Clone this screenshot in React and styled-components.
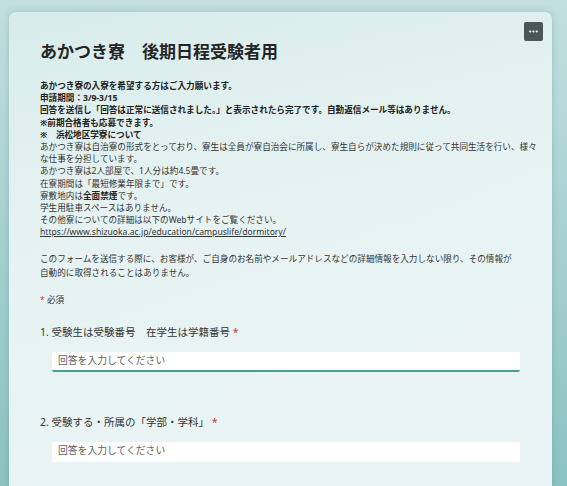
import styled, { createGlobalStyle } from "styled-components";

const GlobalStyle = createGlobalStyle`
  html, body {
    margin: 0;
    padding: 0;
  }
  body {
    background: linear-gradient(180deg, #c3dfdf 0%, #a9d2d2 45%, #8cc2c2 100%);
    font-family: "Noto Sans", "Noto Sans CJK JP", sans-serif;
    overflow: hidden;
  }
`;

export default function App() {
  return (
    <>
      <GlobalStyle />
      <Page>
        <Card>
          <TopBar>
            <MenuButton aria-label="more">
              <svg width="9" height="3" viewBox="0 0 9 3">
                <circle cx="1.2" cy="1.5" r="1.1" fill="#fff" />
                <circle cx="4.5" cy="1.5" r="1.1" fill="#fff" />
                <circle cx="7.8" cy="1.5" r="1.1" fill="#fff" />
              </svg>
            </MenuButton>
          </TopBar>
          <Title>あかつき寮　後期日程受験者用</Title>
          <Description>
            <Line bold>あかつき寮の入寮を希望する方はご入力願います。</Line>
            <Line bold>申請期間：3/9-3/15</Line>
            <Line bold>
              回答を送信し「回答は正常に送信されました。」と表示されたら完了です。自動返信メール等はありません。
            </Line>
            <Line bold>※前期合格者も応募できます。</Line>
            <Line bold>※　浜松地区学寮について</Line>
            <Line>
              あかつき寮は自治寮の形式をとっており、寮生は全員が寮自治会に所属し、寮生自らが決めた規則に従って共同生活を行い、様々な仕事を分担しています。
            </Line>
            <Line>あかつき寮は2人部屋で、1人分は約4.5畳です。</Line>
            <Line>在寮期間は「最短修業年限まで」です。</Line>
            <Line>
              寮敷地内は<strong>全面禁煙</strong>です。
            </Line>
            <Line>学生用駐車スペースはありません。</Line>
            <Line>その他寮についての詳細は以下のWebサイトをご覧ください。</Line>
            <Line>
              <Link href="#">https://www.shizuoka.ac.jp/education/campuslife/dormitory/</Link>
            </Line>
          </Description>
          <Notice>
            このフォームを送信する際に、お客様が、ご自身のお名前やメールアドレスなどの詳細情報を入力しない限り、その情報が自動的に取得されることはありません。
          </Notice>
          <Required>
            <Star>*</Star> 必須
          </Required>
          <Questions>
            <Question>
              <QuestionTitle>
                1. 受験生は受験番号　在学生は学籍番号 <Star>*</Star>
              </QuestionTitle>
              <AnswerInput placeholder="回答を入力してください" active />
            </Question>
            <Question>
              <QuestionTitle>
                2. 受験する・所属の「学部・学科」 <Star>*</Star>
              </QuestionTitle>
              <AnswerInput placeholder="回答を入力してください" />
            </Question>
          </Questions>
        </Card>
      </Page>
    </>
  );
}

const Page = styled.div`
  height: 486px;
  padding: 12px 15px 0 9px;
  box-sizing: border-box;
  display: flex;
`;

const Card = styled.div`
  flex: 1;
  background: linear-gradient(170deg, rgba(220, 238, 238, 0.85) 0%, rgba(236, 245, 245, 0.92) 40%, rgba(240, 247, 247, 0.95) 100%);
  border-radius: 7px 7px 0 0;
  box-shadow: 0 0 6px rgba(60, 110, 110, 0.25);
  padding: 10px 12px 0 31px;
  color: #333333;
`;

const TopBar = styled.div`
  display: flex;
  justify-content: flex-end;
`;

const MenuButton = styled.button`
  width: 19px;
  height: 19px;
  padding: 0;
  border: none;
  border-radius: 2px;
  background-color: #4a5759;
  display: flex;
  align-items: center;
  justify-content: center;
  margin-right: -3px;
`;

const Title = styled.h1`
  margin: 0;
  font-size: 17px;
  line-height: 22px;
  font-weight: 700;
  color: #252525;
`;

const Description = styled.div`
  margin-top: 17px;
  font-size: 8.6px;
  line-height: 12.2px;
`;

const Line = styled.div`
  font-weight: ${(p) => (p.bold ? 700 : 400)};
  color: ${(p) => (p.bold ? "#222222" : "#333333")};
  strong {
    font-weight: 700;
    color: #222222;
  }
`;

const Link = styled.a`
  color: #333333;
  text-decoration: underline;
`;

const Notice = styled.p`
  margin: 13px 0 0;
  padding-right: 26px;
  font-size: 8.6px;
  line-height: 14px;
`;

const Required = styled.div`
  margin-top: 13px;
  font-size: 8.6px;
  line-height: 14px;
`;

const Star = styled.span`
  color: #d13438;
`;

const Questions = styled.div`
  margin-top: 17px;
  padding-right: 20px;
  display: flex;
  flex-direction: column;
  gap: 42px;
`;

const Question = styled.div`
  display: flex;
  flex-direction: column;
  gap: 12px;
`;

const QuestionTitle = styled.div`
  font-size: 10.5px;
  line-height: 16px;
  color: #333333;
`;

const AnswerInput = styled.input`
  margin-left: 12px;
  height: 20px;
  box-sizing: border-box;
  border: none;
  border-radius: 2px;
  border-bottom: 2px solid ${(p) => (p.active ? "#4a9d9d" : "transparent")};
  background: #ffffff;
  padding: 0 6px;
  font-family: "Noto Sans", "Noto Sans CJK JP", sans-serif;
  font-size: 9.8px;
  outline: none;
  &::placeholder {
    color: #5f5f5f;
  }
`;
